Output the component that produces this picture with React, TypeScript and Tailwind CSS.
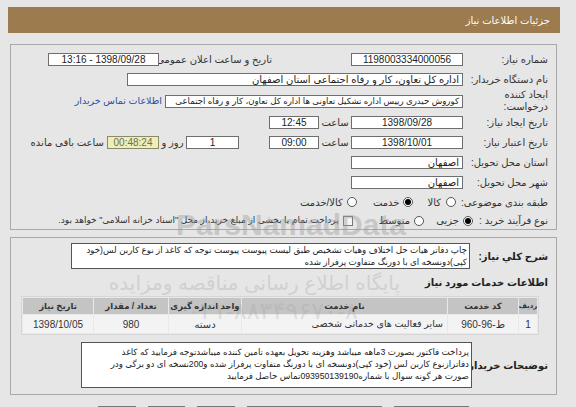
import React from "react";

const Box = ({ w, children, center, className = "" }: { w: string; children?: React.ReactNode; center?: boolean; className?: string }) => (
  <div
    className={`${w} h-[13px] border border-[#6e6e6e] bg-white flex items-center overflow-hidden whitespace-nowrap leading-[11px] text-[#222] ${center ? "justify-center" : "justify-start pr-[3px]"} ${className}`}
  >
    {children}
  </div>
);

const Radio = ({ checked }: { checked?: boolean }) => (
  <span className="w-[10px] h-[10px] rounded-full border border-[#555] bg-white flex items-center justify-center shrink-0">
    {checked && <span className="w-[6px] h-[6px] rounded-full bg-black" />}
  </span>
);

const Th = ({ children, small }: { children: React.ReactNode; small?: boolean }) => (
  <div className={`h-[16px] bg-[#c4c4c4] flex items-center justify-center font-bold ${small ? "text-[7px]" : "text-[8.5px]"} text-[#333] whitespace-nowrap overflow-hidden`}>
    {children}
  </div>
);

const Td = ({ children, right }: { children: React.ReactNode; right?: boolean }) => (
  <div className={`h-[18px] bg-[#f3f3f3] flex items-center whitespace-nowrap overflow-hidden text-[#333] ${right ? "justify-start pr-[4px] text-[9.5px]" : "justify-center"}`}>
    {children}
  </div>
);

export default function App() {
  return (
    <div
      dir="rtl"
      className="w-[576px] h-[407px] overflow-hidden bg-[#e6e6e6] font-['Liberation_Sans','DejaVu_Sans',sans-serif] text-[10px] text-[#333] relative"
    >
      <div className="flex flex-col pt-[7px]">
        {/* header bar */}
        <div className="h-[26px] mr-[16px] ml-[8px] bg-[#9c7b4e] flex items-center pr-[10px] text-white text-[10px]">
          جزئیات اطلاعات نیاز
        </div>

        {/* panel 1 */}
        <div className="mt-[11px] mr-[19px] ml-[10px] h-[186px] border border-[#a9a9a9] pr-[8px] pt-[4px] flex flex-col">
          {/* row 1 */}
          <div className="h-[20px] flex items-center">
            <div className="w-[85px] shrink-0 whitespace-nowrap">شماره نیاز:</div>
            <Box w="w-[112px]" center>1198003334000056</Box>
            <div className="w-[113px] mr-[79px] shrink-0 whitespace-nowrap">تاریخ و ساعت اعلان عمومی:</div>
            <Box w="w-[111px]" center>1398/09/28 - 13:16</Box>
          </div>
          {/* row 2 */}
          <div className="h-[21px] flex items-center">
            <div className="w-[85px] shrink-0 whitespace-nowrap">نام دستگاه خریدار:</div>
            <Box w="w-[336px]">اداره کل تعاون، کار و رفاه اجتماعی استان اصفهان</Box>
          </div>
          {/* row 3 */}
          <div className="h-[22px] flex items-center">
            <div className="w-[85px] shrink-0 leading-[12px]">
              <div>ایجاد کننده</div>
              <div>درخواست:</div>
            </div>
            <Box w="w-[298px]" className="text-[8.6px] pr-[2px]">کوروش حیدری رییس اداره تشکیل تعاونی ها اداره کل تعاون، کار و رفاه اجتماعی</Box>
            <div className="mr-[3px] whitespace-nowrap text-[#2a4fa3] text-[9.5px]">اطلاعات تماس خریدار</div>
          </div>
          {/* row 4 */}
          <div className="h-[20px] flex items-center">
            <div className="w-[85px] shrink-0 whitespace-nowrap">تاریخ ایجاد نیاز:</div>
            <Box w="w-[112px]" center>1398/09/28</Box>
            <div className="w-[32px] text-center shrink-0">ساعت</div>
            <Box w="w-[50px]" center>12:45</Box>
          </div>
          {/* row 5 */}
          <div className="h-[20px] flex items-center">
            <div className="w-[85px] shrink-0 whitespace-nowrap">تاریخ اعتبار نیاز:</div>
            <Box w="w-[112px]" center>1398/10/01</Box>
            <div className="w-[32px] text-center shrink-0">ساعت</div>
            <Box w="w-[50px]" center>09:00</Box>
            <Box w="w-[53px] mr-[30px]" center>1</Box>
            <div className="w-[27px] text-center shrink-0 whitespace-nowrap">روز و</div>
            <div className="w-[52px] h-[13px] border border-[#8a8a6a] bg-[#eeeebb] text-[#6f6f4a] flex items-center justify-center">
              00:48:24
            </div>
            <div className="mr-[3px] whitespace-nowrap">ساعت باقی مانده</div>
          </div>
          {/* row 6 */}
          <div className="h-[20px] flex items-center">
            <div className="w-[85px] shrink-0 whitespace-nowrap">استان محل تحویل:</div>
            <Box w="w-[112px]">اصفهان</Box>
          </div>
          {/* row 7 */}
          <div className="h-[20px] flex items-center">
            <div className="w-[85px] shrink-0 whitespace-nowrap">شهر محل تحویل:</div>
            <Box w="w-[112px]">اصفهان</Box>
          </div>
          {/* row 8 */}
          <div className="h-[20px] flex items-center">
            <div className="w-[78px] shrink-0 whitespace-nowrap">طبقه بندی موضوعی:</div>
            <div className="flex items-center gap-[5px] mr-[14px]">
              <Radio />
              <span>کالا</span>
            </div>
            <div className="flex items-center gap-[4px] mr-[14px]">
              <Radio checked />
              <span>خدمت</span>
            </div>
            <div className="flex items-center gap-[4px] mr-[16px]">
              <Radio />
              <span>کالا/خدمت</span>
            </div>
          </div>
          {/* row 9 */}
          <div className="h-[17px] flex items-center">
            <div className="w-[57px] shrink-0 whitespace-nowrap">نوع فرآیند خرید :</div>
            <div className="flex items-center gap-[4px] mr-[18px]">
              <Radio checked />
              <span>جزیی</span>
            </div>
            <div className="flex items-center gap-[4px] mr-[12px]">
              <Radio />
              <span>متوسط</span>
            </div>
            <div className="flex items-center gap-[4px] mr-[26px]">
              <span className="w-[10px] h-[10px] border border-[#777] bg-[#f4f4f4] shrink-0" />
              <span className="whitespace-nowrap text-[9px]">پرداخت تمام یا بخشی از مبلغ خرید،از محل "اسناد خزانه اسلامی" خواهد بود.</span>
            </div>
          </div>
        </div>

        {/* panel 2 */}
        <div className="mt-[7px] mr-[19px] ml-[10px] h-[158px] border border-[#a9a9a9] pr-[8px] pt-[5px] flex flex-col">
          <div className="flex items-center">
            <div className="w-[78px] shrink-0 whitespace-nowrap font-bold text-[10px] text-[#222]">شرح کلي نياز:</div>
            <div className="w-[399px] h-[26px] border border-[#555] bg-white px-[2px] pt-[1px] text-[8.7px] leading-[11.5px] text-[#222] overflow-hidden whitespace-nowrap">
              <div>چاپ دفاتر هیات حل اختلاف وهیات تشخیص طبق لیست پیوست پیوست توجه که کاغذ از نوع کاربن لس(خود</div>
              <div>کپی)دونسخه ای با دورنگ متفاوت پرفراز شده</div>
            </div>
          </div>
          <div className="mt-[7px] h-[13px] font-bold text-[10px] text-[#222] leading-[13px] whitespace-nowrap">اطلاعات خدمات مورد نیاز</div>
          <div className="mt-[7px] mr-[9px] w-[518px] bg-[#e9e9e9] border border-[#d6d6d6] grid grid-cols-[18px_70px_205px_72px_74px_1fr] gap-[1px] p-[1px] text-center">
            <Th small>ردیف</Th>
            <Th>کد خدمت</Th>
            <Th>نام خدمت</Th>
            <Th>واحد اندازه گیری</Th>
            <Th>تعداد / مقدار</Th>
            <Th>تاریخ نیاز</Th>
            <Td>1</Td>
            <Td>ط-96-960</Td>
            <Td right>سایر فعالیت های خدماتی شخصی</Td>
            <Td>دسته</Td>
            <Td>980</Td>
            <Td>1398/10/05</Td>
          </div>
          <div className="mt-[7px] flex items-center">
            <div className="w-[76px] shrink-0 whitespace-nowrap font-bold text-[10px] text-[#222]">توضیحات خریدار:</div>
            <div className="w-[391px] h-[46px] border border-[#555] bg-white px-[2px] pt-[3px] text-[8.7px] leading-[12px] text-[#222] overflow-hidden whitespace-nowrap">
              <div>پرداخت فاکتور بصورت 3ماهه میباشد وهزینه تحویل بعهده تامین کننده میباشدتوجه فرمایید که کاغذ</div>
              <div>دفاترازنوع کاربن لس (خود کپی)دونسخه ای با دورنگ متفاوت پرفراز شده و200نسخه ای دو برگی  ودر</div>
              <div>صورت هر گونه سوال با شماره093950139190تماس حاصل فرمایید</div>
            </div>
          </div>
        </div>

        {/* buttons */}
        <div className="mt-[11px] mr-[107px] flex gap-[12px]">
          <div className="w-[75px] h-[20px] border border-[#777] bg-[#eefbee]" />
          <div className="w-[135px] h-[20px] border border-[#777] bg-[#eefbee]" />
          <div className="w-[38px] h-[20px] border border-[#777] bg-[#eefbee]" />
          <div className="w-[37px] h-[20px] border border-[#777] bg-[#fde0e0]" />
          <div className="w-[38px] h-[20px] border border-[#777] bg-[#fde0e0]" />
        </div>
      </div>

      {/* watermark overlays */}
      <div className="absolute left-[160px] top-[210px] w-[262px] text-center text-[30px] leading-[30px] font-bold text-[#9a9a9a] opacity-40 pointer-events-none" dir="ltr">
        ParsNamadData
      </div>
      <div className="absolute left-[150px] top-[272px] w-[250px] text-center text-[20px] leading-[22px] text-[#a0a0a0] opacity-30 pointer-events-none whitespace-nowrap">
        پایگاه اطلاع رسانی مناقصه ومزایده
      </div>
      <div className="absolute left-[150px] top-[298px] w-[245px] text-center text-[24px] leading-[26px] text-[#a0a0a0] opacity-25 pointer-events-none whitespace-nowrap" dir="ltr">
        ۰۲۱-۸۸۳۴۹۶۷۰-۸
      </div>
    </div>
  );
}
